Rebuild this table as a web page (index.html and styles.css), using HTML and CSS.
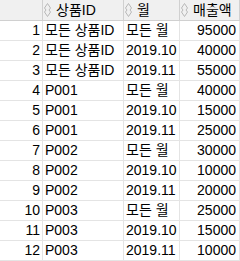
FILE: index.html
```html
<!DOCTYPE html>
<html>
<head>
<meta charset="utf-8">
<link rel="stylesheet" href="styles.css">
</head>
<body>
<table class="grid">
  <thead>
    <tr>
      <th class="idx"></th>
      <th class="c-id"><span class="hd"><svg class="sort" width="7" height="14" viewBox="0 0 7 14"><path d="M3.5 0.5 L6.5 5 L5 7 L6.5 9 L3.5 13.5 L0.5 9 L2 7 L0.5 5 Z" fill="none" stroke="#b8b8b8" stroke-width="1"/></svg><span>상품ID</span></span></th>
      <th class="c-mon"><span class="hd"><svg class="sort" width="7" height="14" viewBox="0 0 7 14"><path d="M3.5 0.5 L6.5 5 L5 7 L6.5 9 L3.5 13.5 L0.5 9 L2 7 L0.5 5 Z" fill="none" stroke="#b8b8b8" stroke-width="1"/></svg><span>월</span></span></th>
      <th class="c-amt"><span class="hd"><svg class="sort" width="7" height="14" viewBox="0 0 7 14"><path d="M3.5 0.5 L6.5 5 L5 7 L6.5 9 L3.5 13.5 L0.5 9 L2 7 L0.5 5 Z" fill="none" stroke="#b8b8b8" stroke-width="1"/></svg><span>매출액</span></span></th>
    </tr>
  </thead>
  <tbody>
    <tr><td class="idx">1</td><td>모든 상품ID</td><td>모든 월</td><td class="num">95000</td></tr>
    <tr><td class="idx">2</td><td>모든 상품ID</td><td>2019.10</td><td class="num">40000</td></tr>
    <tr><td class="idx">3</td><td>모든 상품ID</td><td>2019.11</td><td class="num">55000</td></tr>
    <tr><td class="idx">4</td><td>P001</td><td>모든 월</td><td class="num">40000</td></tr>
    <tr><td class="idx">5</td><td>P001</td><td>2019.10</td><td class="num">15000</td></tr>
    <tr><td class="idx">6</td><td>P001</td><td>2019.11</td><td class="num">25000</td></tr>
    <tr><td class="idx">7</td><td>P002</td><td>모든 월</td><td class="num">30000</td></tr>
    <tr><td class="idx">8</td><td>P002</td><td>2019.10</td><td class="num">10000</td></tr>
    <tr><td class="idx">9</td><td>P002</td><td>2019.11</td><td class="num">20000</td></tr>
    <tr><td class="idx">10</td><td>P003</td><td>모든 월</td><td class="num">25000</td></tr>
    <tr><td class="idx">11</td><td>P003</td><td>2019.10</td><td class="num">15000</td></tr>
    <tr><td class="idx">12</td><td>P003</td><td>2019.11</td><td class="num">10000</td></tr>
  </tbody>
</table>
</body>
</html>
```

FILE: styles.css
```css
html, body {
  margin: 0;
  padding: 0;
  background: #ffffff;
}
.grid {
  border-collapse: collapse;
  table-layout: fixed;
  width: 240px;
  font-family: "Liberation Sans", "Noto Sans CJK KR", sans-serif;
  font-size: 14px;
  line-height: 19px;
  color: #000000;
}
.grid th {
  height: 20px;
  line-height: 20px;
  padding: 0 0 0 1px;
  background: #f0f0f0;
  border-right: 1px solid #d0d0d0;
  border-bottom: 1px solid #d0d0d0;
  font-weight: normal;
  text-align: left;
  white-space: nowrap;
  overflow: hidden;
}
.grid th.idx { width: 41px; }
.grid th.c-id { width: 79px; }
.grid th.c-mon { width: 54px; }
.hd {
  display: flex;
  align-items: center;
  gap: 5px;
  height: 20px;
}
.hd span {
  line-height: 20px;
}
.sort { flex: none; }
.grid td {
  height: 19px;
  padding: 0 2px;
  border-right: 1px solid #e4e4e4;
  border-bottom: 1px solid #e4e4e4;
  white-space: nowrap;
  overflow: hidden;
  vertical-align: middle;
}
.grid td.idx { text-align: right; padding-right: 2px; }
.grid td.num { text-align: right; padding-right: 3px; }
```
